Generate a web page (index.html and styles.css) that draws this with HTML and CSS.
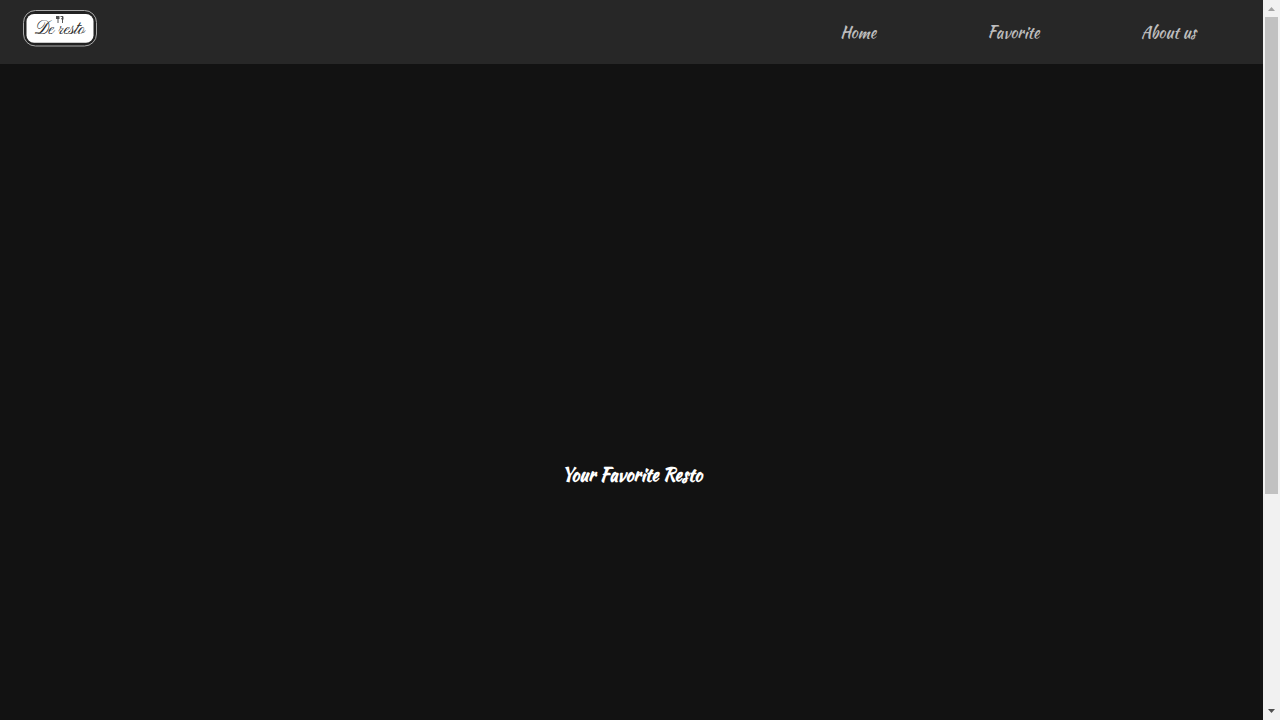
FILE: index.html
```html
<!DOCTYPE html>
<html lang="en">
<head>
<meta charset="utf-8">
<title>De resto</title>
<link rel="stylesheet" href="styles.css">
</head>
<body>
<div class="page">
  <header class="navbar">
    <svg class="logo" width="76" height="38" viewBox="0 0 76 38">
      <rect x="1.500" y="1.500" width="73" height="35.500" rx="12" fill="#222" stroke="#aaa"/>
      <rect x="4.500" y="5" width="67" height="28.700" rx="7.500" fill="#fff"/>
      <path d="M34 7h3.500v3h-3.500z" fill="#555"/>
      <path d="M36 9v5M38.500 7.500H41v3l-2-1M40.500 7.500v6.500" fill="none" stroke="#444" stroke-width=".9"/>
      <text class="logo-text" x="13" y="25" textLength="49.500" lengthAdjust="spacingAndGlyphs">De resto</text>
    </svg>
    <nav class="menu">
      <a class="link">Home</a>
      <a class="link">Favorite</a>
      <a class="link">About us</a>
    </nav>
  </header>
  <main class="content"><h1 class="title">Your Favorite Resto</h1></main>
</div>
<div class="scrollbar">
  <svg class="arrow" width="17" height="17" viewBox="0 0 17 17"><path d="M5 11h7L8.500 7z" fill="#a3a3a3"/></svg>
  <div class="thumb"></div>
  <svg class="arrow end" width="17" height="17" viewBox="0 0 17 17"><path d="M5 6h7L8.500 10z" fill="#505050"/></svg>
</div>
</body>
</html>
```
FILE: styles.css
```css
body {
  margin: 0;
  height: 720px;
  display: flex;
  overflow: hidden;
  background: #121212;
  font-family: "Kaushan Script", Lato, sans-serif;
}
.page { flex: 1; display: flex; flex-direction: column; }
.navbar {
  box-sizing: border-box;
  height: 64px;
  padding: 9px 16.8px 0 22px;
  display: flex;
  justify-content: space-between;
  background: #272727;
}
.logo-text {
  font: 19px "Pinyon Script", "Alex Brush", Allura, "Great Vibes", cursive;
  fill: #222;
  stroke: #222;
  stroke-width: .1px;
}
.menu { display: grid; grid-template-columns: repeat(3, 155.2px); height: 46px; }
.link {
  display: flex;
  align-items: center;
  justify-content: center;
  font-size: 16px;
  color: #bdbdbd;
}
.content { flex: 1; padding-top: 399px; text-align: center; }
.title {
  margin: 0 0 0 1px;
  font-size: 18px;
  line-height: 24px;
  font-weight: 700;
  color: #fff;
}
.scrollbar {
  width: 17px;
  display: flex;
  flex-direction: column;
  background: #f1f1f1;
}
.thumb { height: 477px; margin: 0 2px; background: #c1c1c1; }
.end { margin-top: auto; }
```
